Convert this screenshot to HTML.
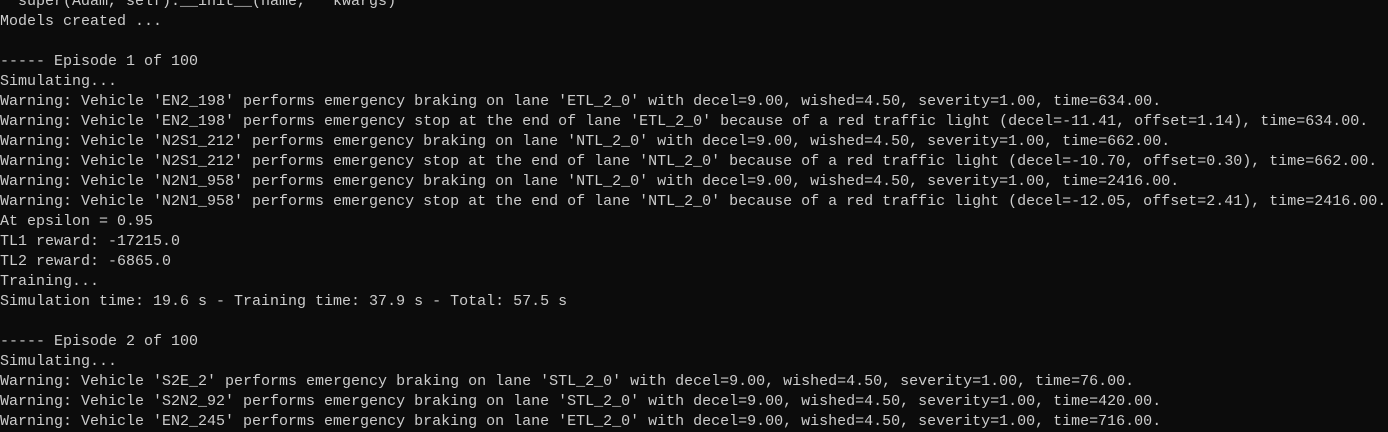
<!DOCTYPE html>
<html><head><meta charset="utf-8"><style>
html,body{margin:0;padding:0;background:#0c0c0c;width:1388px;height:417px;overflow:hidden}
pre{margin:0;position:absolute;top:-8px;left:0;font-family:"Liberation Mono",monospace;font-size:15px;line-height:20px;color:#cccccc;white-space:pre}
</style></head><body><pre>  super(Adam, self).__init__(name, **kwargs)
Models created ...

----- Episode 1 of 100
Simulating...
Warning: Vehicle 'EN2_198' performs emergency braking on lane 'ETL_2_0' with decel=9.00, wished=4.50, severity=1.00, time=634.00.
Warning: Vehicle 'EN2_198' performs emergency stop at the end of lane 'ETL_2_0' because of a red traffic light (decel=-11.41, offset=1.14), time=634.00.
Warning: Vehicle 'N2S1_212' performs emergency braking on lane 'NTL_2_0' with decel=9.00, wished=4.50, severity=1.00, time=662.00.
Warning: Vehicle 'N2S1_212' performs emergency stop at the end of lane 'NTL_2_0' because of a red traffic light (decel=-10.70, offset=0.30), time=662.00.
Warning: Vehicle 'N2N1_958' performs emergency braking on lane 'NTL_2_0' with decel=9.00, wished=4.50, severity=1.00, time=2416.00.
Warning: Vehicle 'N2N1_958' performs emergency stop at the end of lane 'NTL_2_0' because of a red traffic light (decel=-12.05, offset=2.41), time=2416.00.
At epsilon = 0.95
TL1 reward: -17215.0
TL2 reward: -6865.0
Training...
Simulation time: 19.6 s - Training time: 37.9 s - Total: 57.5 s

----- Episode 2 of 100
Simulating...
Warning: Vehicle 'S2E_2' performs emergency braking on lane 'STL_2_0' with decel=9.00, wished=4.50, severity=1.00, time=76.00.
Warning: Vehicle 'S2N2_92' performs emergency braking on lane 'STL_2_0' with decel=9.00, wished=4.50, severity=1.00, time=420.00.
Warning: Vehicle 'EN2_245' performs emergency braking on lane 'ETL_2_0' with decel=9.00, wished=4.50, severity=1.00, time=716.00.
</pre></body></html>
